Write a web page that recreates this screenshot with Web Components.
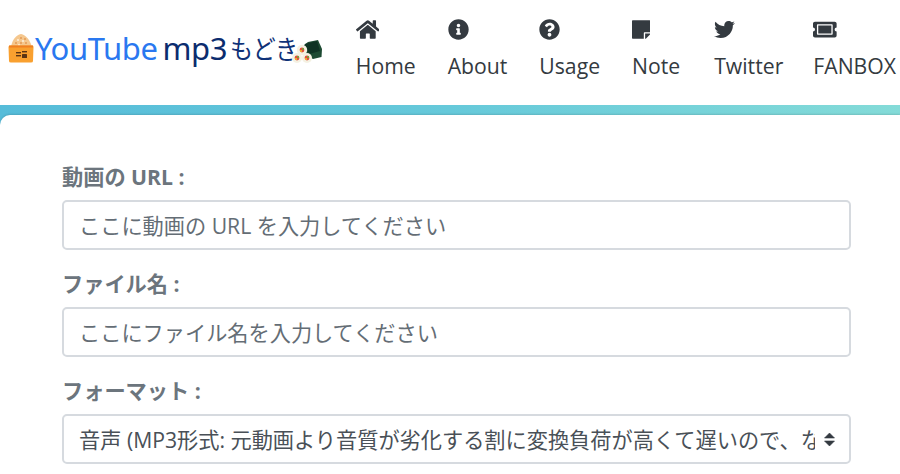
<!DOCTYPE html>
<html lang="ja">
<head>
<meta charset="utf-8">
<title>YouTube mp3 もどき</title>
<style>
    html, body {
        margin: 0;
        background: #fff;
        overflow: hidden;
    }
    body {
        font-family: "Open Sans", "Noto Sans CJK JP", sans-serif;
    }
</style>
</head>
<body>
<site-page>
    <site-header slot="header">
        <site-logo slot="logo"></site-logo>
        <nav-item icon="home">Home</nav-item>
        <nav-item icon="info">About</nav-item>
        <nav-item icon="question">Usage</nav-item>
        <nav-item icon="note">Note</nav-item>
        <nav-item icon="twitter" style="margin: 0 -2px 0 2px">Twitter</nav-item>
        <nav-item icon="ticket">FANBOX</nav-item>
    </site-header>
    <form-card>
        <form-field label="動画の URL :">
            <input-box placeholder="ここに動画の URL を入力してください"></input-box>
        </form-field>
        <form-field label="ファイル名 :">
            <input-box placeholder="ここにファイル名を入力してください"></input-box>
        </form-field>
        <form-field label="フォーマット :">
            <select-box value="音声 (MP3形式: 元動画より音質が劣化する割に変換負荷が高くて遅いので、なるべく使わないでください)"></select-box>
        </form-field>
    </form-card>
</site-page>

<script>
const ICONS = {
    home: ['0 0 576 512', 'M280.37 148.26L96 300.11V464a16 16 0 0 0 16 16l112.06-.29a16 16 0 0 0 15.92-16V368a16 16 0 0 1 16-16h64a16 16 0 0 1 16 16v95.64a16 16 0 0 0 16 16.05L464 480a16 16 0 0 0 16-16V300L295.67 148.26a12.19 12.19 0 0 0-15.3 0zM571.6 251.47L488 182.56V44.05a12 12 0 0 0-12-12h-56a12 12 0 0 0-12 12v72.61L318.47 43a48 48 0 0 0-61 0L4.34 251.47a12 12 0 0 0-1.6 16.9l25.5 31A12 12 0 0 0 45.15 301l235.22-193.74a12.19 12.19 0 0 1 15.3 0L530.9 301a12 12 0 0 0 16.9-1.6l25.5-31a12 12 0 0 0-1.7-16.93z'],
    info: ['0 0 512 512', 'M256 8C119.043 8 8 119.083 8 256c0 136.997 111.043 248 248 248s248-111.003 248-248C504 119.083 392.957 8 256 8zm0 110c23.196 0 42 18.804 42 42s-18.804 42-42 42-42-18.804-42-42 18.804-42 42-42zm56 254c0 6.627-5.373 12-12 12h-88c-6.627 0-12-5.373-12-12v-24c0-6.627 5.373-12 12-12h12v-64h-12c-6.627 0-12-5.373-12-12v-24c0-6.627 5.373-12 12-12h64c6.627 0 12 5.373 12 12v100h12c6.627 0 12 5.373 12 12v24z'],
    question: ['0 0 512 512', 'M504 256c0 136.997-111.043 248-248 248S8 392.997 8 256C8 119.083 119.043 8 256 8s248 111.083 248 248zM262.655 90c-54.497 0-89.255 22.957-116.549 63.758-3.536 5.286-2.353 12.415 2.715 16.258l34.699 26.31c5.205 3.947 12.621 3.008 16.665-2.122 17.864-22.658 30.113-35.797 57.303-35.797 20.429 0 45.698 13.148 45.698 32.958 0 14.976-12.363 22.667-32.534 33.976C247.128 238.528 216 254.941 216 296v4c0 6.627 5.373 12 12 12h56c6.627 0 12-5.373 12-12v-1.333c0-28.462 83.186-29.647 83.186-106.667 0-58.002-60.165-102-116.531-102zM256 338c-25.365 0-46 20.635-46 46 0 25.364 20.635 46 46 46s46-20.636 46-46c0-25.365-20.635-46-46-46z'],
    note: ['0 0 448 512', 'M312 320h136V56c0-13.3-10.7-24-24-24H24C10.7 32 0 42.7 0 56v400c0 13.3 10.7 24 24 24h264V344c0-13.2 10.8-24 24-24zm129 55l-98 98c-4.5 4.5-10.6 7-17 7h-6V352h128v6.1c0 6.3-2.5 12.4-7 16.9z'],
    twitter: ['0 0 512 512', 'M459.37 151.716c.325 4.548.325 9.097.325 13.645 0 138.72-105.583 298.558-298.558 298.558-59.452 0-114.68-17.219-161.137-47.106 8.447.974 16.568 1.299 25.34 1.299 49.055 0 94.213-16.568 130.274-44.832-46.132-.975-84.792-31.188-98.112-72.772 6.498.974 12.995 1.624 19.818 1.624 9.421 0 18.843-1.3 27.614-3.573-48.081-9.747-84.143-51.98-84.143-102.985v-1.299c13.969 7.797 30.214 12.67 47.431 13.319-28.264-18.843-46.781-51.005-46.781-87.391 0-19.492 5.197-37.36 14.294-52.954 51.655 63.675 129.3 105.258 216.365 109.807-1.624-7.797-2.599-15.918-2.599-24.04 0-57.828 46.782-104.934 104.934-104.934 30.213 0 57.502 12.67 76.67 33.137 23.715-4.548 46.456-13.32 66.599-25.34-7.798 24.366-24.366 44.833-46.132 57.827 21.117-2.273 41.584-8.122 60.426-16.243-14.292 20.791-32.161 39.308-52.628 54.253z'],
    ticket: ['0 0 576 512', 'M128 160h320v192H128V160zm400 96c0 26.51 21.49 48 48 48v96c0 26.51-21.49 48-48 48H48c-26.51 0-48-21.49-48-48v-96c26.51 0 48-21.49 48-48s-21.49-48-48-48v-96c0-26.51 21.49-48 48-48h480c26.51 0 48 21.49 48 48v96c-26.51 0-48 21.49-48 48zm-48-104c0-13.255-10.745-24-24-24H120c-13.255 0-24 10.745-24 24v208c0 13.255 10.745 24 24 24h336c13.255 0 24-10.745 24-24V152z']
};

class SitePage extends HTMLElement {
    constructor() {
        super();
        this.attachShadow({ mode: 'open' });
        this.shadowRoot.innerHTML = `
            <style>
                :host { display: block; }
                .band {
                    background: linear-gradient(90deg, #56bcd9 0%, #66c9da 50%, #84dbd8 100%);
                    padding-top: 10px;
                }
                .sheet {
                    background: #fff;
                    border-top-left-radius: 10px;
                    box-shadow: 0 -1px 2px rgba(0, 0, 0, .12);
                }
            </style>
            <slot name="header"></slot>
            <div class="band"><div class="sheet"><slot></slot></div></div>
        `;
    }
}

class SiteHeader extends HTMLElement {
    constructor() {
        super();
        this.attachShadow({ mode: 'open' });
        this.shadowRoot.innerHTML = `
            <style>
                :host {
                    display: flex;
                    justify-content: space-between;
                    height: 105px;
                    padding: 0 4px 0 8px;
                    background: #fff;
                }
                nav {
                    display: flex;
                    gap: 32px;
                }
            </style>
            <slot name="logo"></slot>
            <nav><slot></slot></nav>
        `;
    }
}

class SiteLogo extends HTMLElement {
    constructor() {
        super();
        this.attachShadow({ mode: 'open' });
        this.shadowRoot.innerHTML = `
            <style>
                :host {
                    display: block;
                    padding-top: 28px;
                }
                .wrap {
                    display: flex;
                    align-items: center;
                    height: 40px;
                    white-space: nowrap;
                }
                svg { display: block; flex: none; }
                .yt, .mp3, .jp { font-family: "Noto Sans", sans-serif; font-size: 31px; line-height: 40px; }
                .yt { color: #2a78f0; margin-left: 1px; letter-spacing: -.4px; }
                .mp3 { color: #0b2c6e; margin-left: 5px; letter-spacing: -.4px; }
                .jp {
                    color: #0f3278;
                    font-family: "Noto Sans CJK JP", sans-serif;
                    font-weight: 400;
                    font-size: 23px;
                    margin-left: 3px;
                    transform: scaleY(1.12);
                }
                .roll { margin-left: -6px; margin-top: 6px; }
            </style>
            <div class="wrap">
                <svg width="26" height="30" viewBox="0 0 26 30">
                    <path d="M3 14 C4 7 8 2 13 1 C18 2 22 7 24 14 Z" fill="#f5c78e"/>
                    <g fill="#e39a55"><circle cx="8" cy="10" r="1"/><circle cx="13" cy="5" r="1"/><circle cx="18" cy="10" r="1"/><circle cx="13" cy="10" r="1"/><circle cx="17" cy="6" r="1"/></g>
                    <g fill="#fdeed8"><circle cx="10" cy="7" r="1.1"/><circle cx="15" cy="8" r="1.1"/><circle cx="11" cy="12" r="1"/></g>
                    <path d="M2 12.5 H24.5 Q25.5 12.5 25.5 14 L25 28 Q25 29.5 23 29.5 H3 Q1 29.5 1 28 L.5 14 Q.5 12.5 2 12.5 Z" fill="#f9a02f"/>
                    <path d="M1 12.5 H25 V14.5 H1 Z" fill="#ef7f22"/>
                    <g fill="#5b3413"><rect x="8" y="19" width="5" height="1.4"/><rect x="8" y="22" width="5" height="1.4"/><rect x="14" y="18" width="5" height="1.4"/><rect x="14" y="21" width="5" height="4" rx=".6"/></g>
                </svg>
                <span class="yt">YouTube</span>
                <span class="mp3">mp3</span>
                <span class="jp">もどき</span>
                <svg class="roll" width="31" height="24" viewBox="0 0 31 24">
                    <path d="M12 6 L16 3 L26 1 L30 10 L29.5 18 L21 20 L14 16 Z" fill="#1d4a32"/>
                    <path d="M13 5 L25 2 L28 12 L17 15 Z" fill="#0f3324"/>
                    <circle cx="10" cy="11" r="5.2" fill="#f4f1e2"/>
                    <circle cx="5" cy="19" r="5" fill="#f4f1e2"/>
                    <circle cx="15" cy="19" r="5" fill="#f4f1e2"/>
                    <g fill="#e0503c"><circle cx="10" cy="11" r="2.4"/><circle cx="5" cy="19" r="2.4"/><circle cx="15" cy="19" r="2.4"/></g>
                    <g fill="#5fae3c"><circle cx="11" cy="10" r="1"/><circle cx="6" cy="18" r="1"/><circle cx="16" cy="18" r="1"/></g>
                    <g fill="#f3c42e"><circle cx="9" cy="12" r="1"/><circle cx="4" cy="20" r="1"/><circle cx="14" cy="20" r="1"/></g>
                </svg>
            </div>
        `;
    }
}

class NavItem extends HTMLElement {
    constructor() {
        super();
        const [viewBox, d] = ICONS[this.getAttribute('icon')];
        this.attachShadow({ mode: 'open' });
        this.shadowRoot.innerHTML = `
            <style>
                :host {
                    display: flex;
                    flex-direction: column;
                    align-items: flex-start;
                    padding-top: 19px;
                    color: #343a40;
                    font-size: 21.2px;
                    line-height: 32px;
                    white-space: nowrap;
                }
                svg {
                    display: block;
                    height: 21px;
                    width: auto;
                    fill: #343a40;
                    margin-bottom: 10px;
                }
            </style>
            <svg viewBox="${viewBox}"><path d="${d}"/></svg>
            <slot></slot>
        `;
    }
}

class FormCard extends HTMLElement {
    constructor() {
        super();
        this.attachShadow({ mode: 'open' });
        this.shadowRoot.innerHTML = `
            <style>
                :host {
                    display: block;
                    padding: 47px 49px 10px 62px;
                }
            </style>
            <slot></slot>
        `;
    }
}

class FormField extends HTMLElement {
    constructor() {
        super();
        this.attachShadow({ mode: 'open' });
        this.shadowRoot.innerHTML = `
            <style>
                :host {
                    display: block;
                    margin-bottom: 19px;
                }
                label {
                    display: block;
                    color: #6c757d;
                    font-size: 21.2px;
                    font-weight: 700;
                    line-height: 30px;
                    margin-bottom: 8px;
                }
            </style>
            <label>${this.getAttribute('label')}</label>
            <slot></slot>
        `;
    }
}

class InputBox extends HTMLElement {
    constructor() {
        super();
        this.attachShadow({ mode: 'open' });
        this.shadowRoot.innerHTML = `
            <style>
                :host { display: block; }
                input {
                    display: block;
                    box-sizing: border-box;
                    width: 100%;
                    height: 50px;
                    padding: 0 15px;
                    border: 2px solid #d6dadf;
                    border-radius: 5px;
                    background: #fff;
                    color: #495057;
                    font: 400 21.2px "Open Sans", "Noto Sans CJK JP", sans-serif;
                    outline: none;
                }
                input::placeholder {
                    color: #646d75;
                    opacity: 1;
                }
            </style>
            <input type="text" placeholder="${this.getAttribute('placeholder')}">
        `;
    }
}

class SelectBox extends HTMLElement {
    constructor() {
        super();
        this.attachShadow({ mode: 'open' });
        this.shadowRoot.innerHTML = `
            <style>
                :host {
                    display: block;
                    position: relative;
                }
                select {
                    display: block;
                    box-sizing: border-box;
                    width: 100%;
                    height: 50px;
                    padding: 0 34px 0 15px;
                    border: 2px solid #d6dadf;
                    border-radius: 5px;
                    background: #fff;
                    color: #495057;
                    font: 400 21.2px "Open Sans", "Noto Sans CJK JP", sans-serif;
                    appearance: none;
                    outline: none;
                }
                svg {
                    position: absolute;
                    right: 16px;
                    top: 19px;
                    pointer-events: none;
                }
            </style>
            <select><option>${this.getAttribute('value')}</option></select>
            <svg width="11" height="13" viewBox="0 0 11 13"><path d="M5.5 0 L10.5 5 H.5 Z M5.5 13 L.5 8 H10.5 Z" fill="#343a40" stroke="#343a40" stroke-width=".6" stroke-linejoin="round"/></svg>
        `;
    }
}

customElements.define('site-page', SitePage);
customElements.define('site-header', SiteHeader);
customElements.define('site-logo', SiteLogo);
customElements.define('nav-item', NavItem);
customElements.define('form-card', FormCard);
customElements.define('form-field', FormField);
customElements.define('input-box', InputBox);
customElements.define('select-box', SelectBox);
</script>
</body>
</html>
